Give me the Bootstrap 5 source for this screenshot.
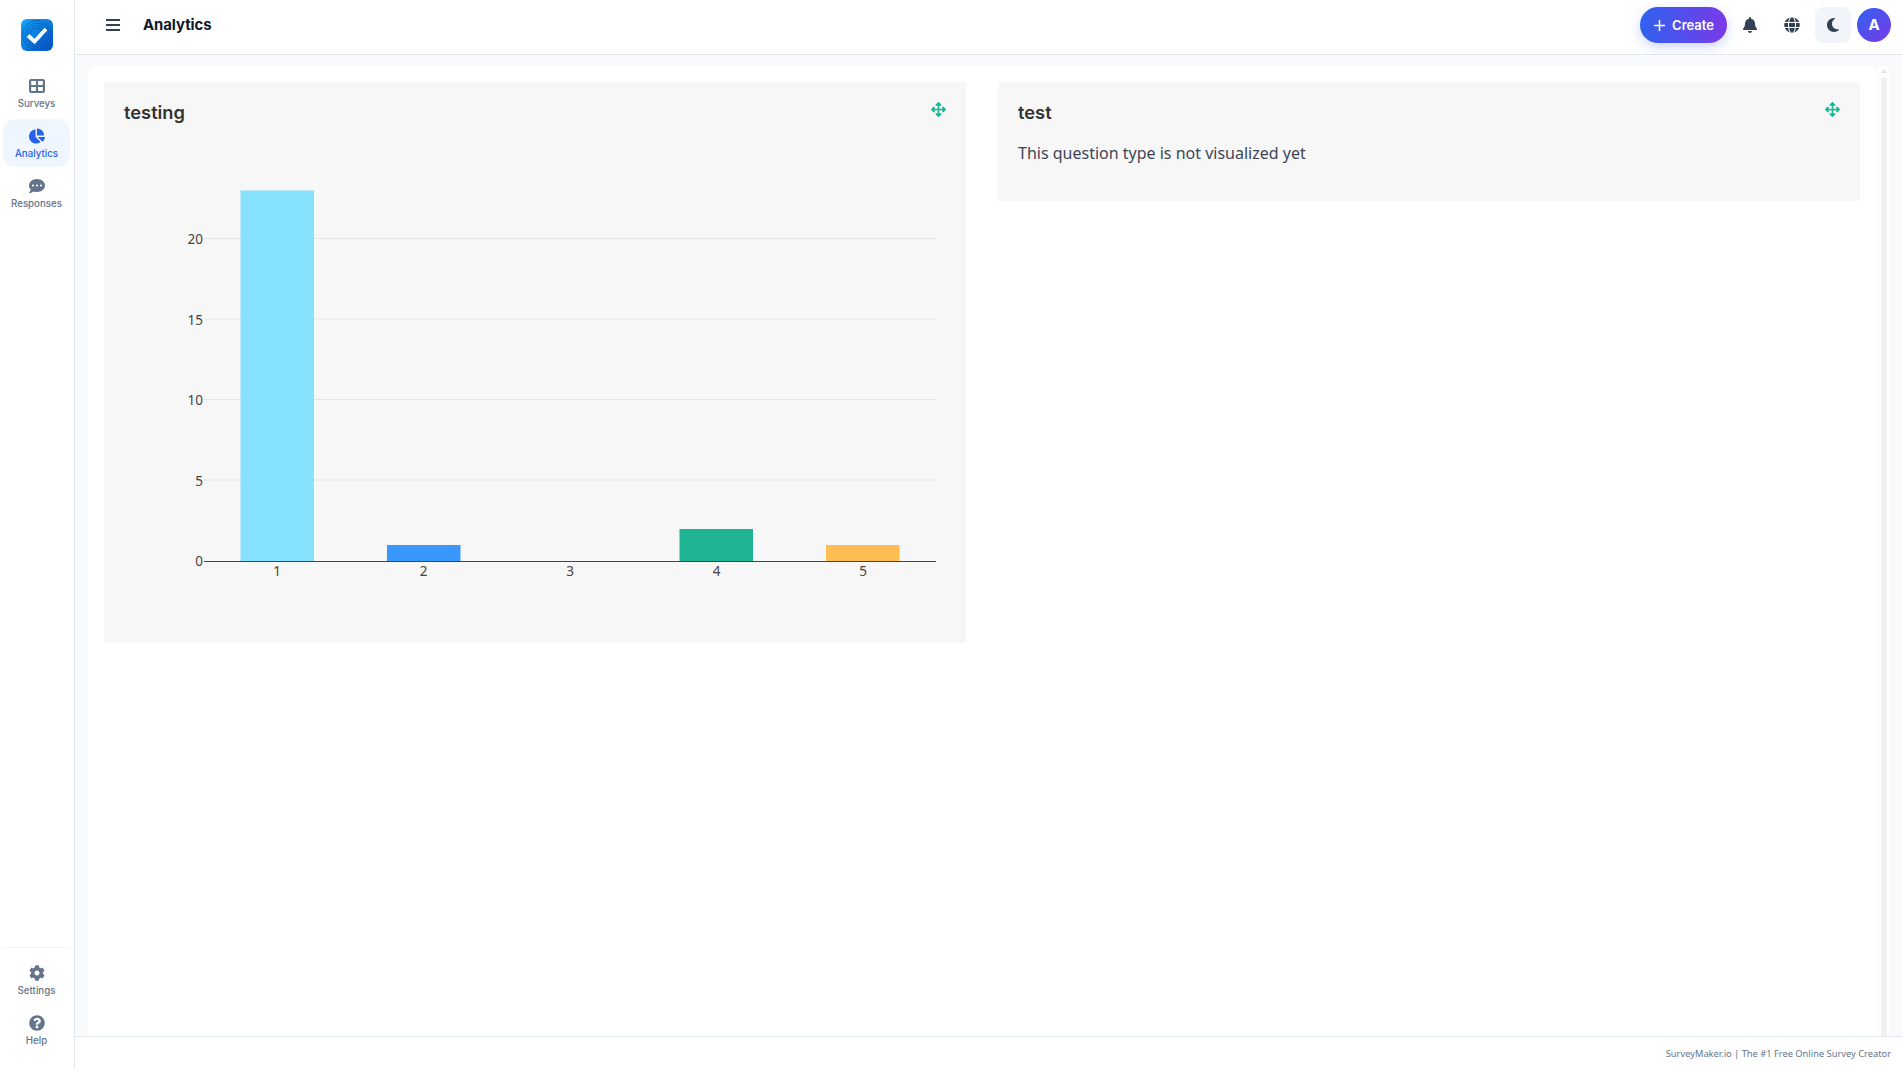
<!DOCTYPE html>
<html lang="en">
<head>
    <meta charset="UTF-8">
    <meta name="viewport" content="width=device-width, initial-scale=1.0">
    <title>Analytics</title>
    <link href="https://cdn.jsdelivr.net/npm/bootstrap@5.3.0/dist/css/bootstrap.min.css" rel="stylesheet">
    <style>
        body { font-family: "Inter", "Liberation Sans", sans-serif; background: #fff; overflow: hidden; color: #334155; }
        .side-rail { width: 75px; border-right: 1px solid #e2e8f0; padding: 0 4px 13px 3px; }
        .side-logo { padding: 19px 0 18px 1px; text-align: center; line-height: 0; }
        .side-link { display: flex; flex-direction: column; align-items: center; height: 48px; margin-bottom: 2px; padding-top: 9px; border-radius: 12px; color: #64748b; font-size: 9.700px; font-weight: 500; line-height: 14px; text-decoration: none; }
        .side-link svg { width: 16px; height: 16px; margin-bottom: 3px; fill: currentColor; }
        .side-link.on { background: #eff6ff; color: #2563eb; }
        .side-foot { border-top: 1px solid #f1f5f9; padding-top: 8px; }
        .top-bar { height: 55px; border-bottom: 1px solid #e2e8f0; padding: 0 11px 4px 31px; }
        .top-title { font-size: 14.800px; font-weight: 700; color: #0f172a; margin: 2px 0 0 23px; }
        .burger { width: 14px; height: 12px; stroke: #334155; stroke-width: 2; }
        .top-tools { gap: 5.500px; }
        .create-btn { height: 36px; width: 87px; border-radius: 18px; border: 0; color: #fff; font-size: 13px; font-weight: 600; background: linear-gradient(90deg, #2f62ef, #7a3ae8); box-shadow: 0 4px 12px rgba(59, 94, 240, .25); padding: 2px 0 0 2px; }
        .create-btn svg { margin-top: -1px; margin-right: 7px; }
        .top-icon { width: 36px; height: 36px; border-radius: 8px; color: #334155; }
        .top-icon svg { width: 16px; height: 16px; fill: currentColor; }
        .top-icon.moon-box { background: #f1f5f9; }
        .avatar-dot { width: 34px; height: 34px; border-radius: 50%; margin-left: .500px; background: linear-gradient(135deg, #2f62ef, #7a3ae8); color: #fff; font-size: 15px; font-weight: 700; }
        .work-area { background: #f8fafc; padding: 11px 13px 0 13px; min-height: 0; gap: 1px; }
        .white-panel { background: #fff; border-radius: 9px 9px 0 0; padding: 16px 18px 16px 16px; }
        .scroll-rail { width: 10px; padding: 0 2px; background: #fff; }
        .scroll-arrow { width: 0; height: 0; margin: 3px 0 4px; border: 3px solid transparent; border-top: 0; border-bottom: 4px solid #e2e5e9; }
        .scroll-thumb { background: #f0f1f3; border-radius: 3px 3px 0 0; }
        .card-row { --bs-gutter-x: 32px; --bs-gutter-y: 0; }
        .stat-box { background: #f7f7f7; padding: 20px; position: relative; }
        .stat-title { font-size: 18.300px; line-height: 22px; font-weight: 600; color: #333; margin: -1px 0 17px; }
        .stat-note { font-family: "Noto Sans", sans-serif; font-size: 16px; line-height: 24px; color: #3e4656; margin: 0 0 16px; padding-top: 1px; }
        .move-ico { position: absolute; top: 20px; right: 20px; width: 15px; height: 15px; fill: #1eb594; }
        .chart-svg { display: block; width: 822px; height: 482px; margin-bottom: 1px; }
        .chart-svg text { font-family: "Noto Sans", sans-serif; font-size: 13.500px; fill: #444; }
        .foot-bar { height: 33px; border-top: 1px solid #e2e8f0; padding: 1px 11px 0; font-family: "Noto Sans", sans-serif; font-size: 9.300px; color: #64748b; }
    </style>
</head>
<body>
<div class="d-flex vh-100">
    <!-- Sidebar -->
    <nav class="side-rail d-flex flex-column flex-shrink-0">
        <div class="side-logo">
            <svg width="32" height="32" viewBox="0 0 32 32">
                <defs>
                    <linearGradient id="logoBg" x1="0" y1="0" x2="1" y2="1">
                        <stop offset="0" stop-color="#12a8f8"/>
                        <stop offset="1" stop-color="#0450c4"/>
                    </linearGradient>
                </defs>
                <rect width="32" height="32" rx="6" fill="url(#logoBg)"/>
                <g fill="none" stroke="#083a9e" stroke-opacity=".6" stroke-width=".8">
                    <circle cx="16" cy="16" r="7"/><circle cx="16" cy="16" r="9.500"/><circle cx="16" cy="16" r="12"/><circle cx="16" cy="16" r="14.500"/>
                </g>
                <path d="M7 16.500l6.500 6L25 10" fill="none" stroke="#fff" stroke-width="3.800"/>
            </svg>
        </div>
        <a class="side-link" href="#">
            <svg viewBox="0 0 16 16"><path fill-rule="evenodd" d="M2 1h12a2 2 0 0 1 2 2v10a2 2 0 0 1-2 2H2a2 2 0 0 1-2-2V3a2 2 0 0 1 2-2zm.2 2v4h4.700V3H2.200zm6.900 0v4h4.700V3H9.100zM2.200 9v4h4.700V9H2.200zm6.900 0v4h4.700V9H9.100z"/></svg>
            Surveys
        </a>
        <a class="side-link on" href="#">
            <svg viewBox="0 0 544 512"><path d="M527.79 288H290.5l158.03 158.03c6.04 6.04 15.98 6.53 22.19.68 38.7-36.46 65.32-85.61 73.13-140.86 1.34-9.46-6.51-17.85-16.06-17.85zm-15.83-64.8C503.72 103.74 408.26 8.28 288.8.04 279.68-.59 272 7.1 272 16.24V240h223.77c9.14 0 16.82-7.68 16.19-16.8zM224 288V50.71c0-9.55-8.39-17.4-17.84-16.06C86.99 51.49-4.1 155.6.14 280.37 4.5 408.51 114.83 513.59 243.03 511.98c50.4-.63 96.97-16.87 135.26-44.03 7.9-5.6 8.42-17.23 1.57-24.08L224 288z"/></svg>
            Analytics
        </a>
        <a class="side-link" href="#">
            <svg viewBox="0 0 512 512"><path d="M256 32C114.6 32 0 125.1 0 240c0 49.6 21.4 95 57 130.7C44.5 421.1 2.7 466 2.2 466.5c-2.2 2.3-2.8 5.7-1.5 8.7S4.8 480 8 480c66.3 0 116-31.8 140.6-51.4 32.7 12.3 69 19.4 107.4 19.4 141.400 0 256-93.100 256-208S397.400 32 256 32zM128 272c-17.700 0-32-14.300-32-32s14.300-32 32-32 32 14.300 32 32-14.300 32-32 32zm128 0c-17.700 0-32-14.300-32-32s14.300-32 32-32 32 14.300 32 32-14.300 32-32 32zm128 0c-17.700 0-32-14.300-32-32s14.300-32 32-32 32 14.300 32 32-14.300 32-32 32z"/></svg>
            Responses
        </a>
        <div class="side-foot mt-auto">
            <a class="side-link" href="#">
                <svg viewBox="0 0 512 512"><path d="M487.4 315.7l-42.6-24.6c4.3-23.2 4.3-47 0-70.2l42.6-24.6c4.9-2.8 7.1-8.6 5.5-14-11.1-35.6-30-67.8-54.7-94.6-3.8-4.1-10-5.1-14.8-2.3L380.8 110c-17.9-15.4-38.5-27.3-60.8-35.1V25.8c0-5.6-3.9-10.5-9.4-11.7-36.7-8.2-74.3-7.8-109.2 0-5.5 1.2-9.4 6.1-9.4 11.7V75c-22.2 7.9-42.8 19.8-60.8 35.1L88.7 85.500c-4.900-2.800-11-1.900-14.800 2.300-24.700 26.700-43.600 58.900-54.700 94.600-1.700 5.400.6 11.200 5.500 14L67.300 221c-4.300 23.200-4.300 47 0 70.200l-42.600 24.600c-4.900 2.800-7.100 8.600-5.500 14 11.100 35.600 30 67.800 54.700 94.600 3.800 4.100 10 5.100 14.800 2.300l42.600-24.600c17.900 15.400 38.500 27.300 60.800 35.100v49.200c0 5.600 3.900 10.500 9.400 11.700 36.700 8.200 74.300 7.800 109.200 0 5.500-1.200 9.400-6.100 9.400-11.700v-49.200c22.200-7.900 42.800-19.800 60.800-35.100l42.600 24.600c4.900 2.800 11 1.900 14.800-2.300 24.700-26.700 43.600-58.900 54.700-94.600 1.500-5.500-.7-11.300-5.600-14.100zM256 336c-44.100 0-80-35.900-80-80s35.900-80 80-80 80 35.900 80 80-35.900 80-80 80z"/></svg>
                Settings
            </a>
            <a class="side-link" href="#">
                <svg viewBox="0 0 512 512"><path d="M504 256c0 136.997-111.043 248-248 248S8 392.997 8 256C8 119.083 119.043 8 256 8s248 111.083 248 248zM262.655 90c-54.497 0-89.255 22.957-116.549 63.758-3.536 5.286-2.353 12.415 2.715 16.258l34.699 26.310c5.205 3.947 12.621 3.008 16.665-2.122 17.864-22.658 30.113-35.797 57.303-35.797 20.429 0 45.698 13.148 45.698 32.958 0 14.976-12.363 22.667-32.534 33.976C247.128 238.528 216 254.941 216 296v4c0 6.627 5.373 12 12 12h56c6.627 0 12-5.373 12-12v-1.333c0-28.462 83.186-29.647 83.186-106.667 0-58.002-60.165-102-116.531-102zM256 338c-25.365 0-46 20.635-46 46 0 25.364 20.635 46 46 46s46-20.636 46-46c0-25.365-20.635-46-46-46z"/></svg>
                Help
            </a>
        </div>
    </nav>

    <div class="d-flex flex-column flex-grow-1" style="min-width:0">
        <!-- Top bar -->
        <header class="top-bar d-flex align-items-center flex-shrink-0">
            <svg class="burger" viewBox="0 0 14 12"><path d="M0 1h14M0 6h14M0 11h14"/></svg>
            <h1 class="top-title">Analytics</h1>
            <div class="top-tools d-flex align-items-center ms-auto">
                <button class="create-btn d-flex align-items-center justify-content-center">
                    <svg width="11" height="11" viewBox="0 0 11 11"><path d="M5.500 0v11M0 5.500h11" stroke="#fff" stroke-width="1.500"/></svg>Create
                </button>
                <span class="top-icon d-flex align-items-center justify-content-center">
                    <svg viewBox="0 0 448 512"><path d="M224 512c35.320 0 63.970-28.650 63.970-64H160.030c0 35.350 28.650 64 63.970 64zm215.390-149.710c-19.320-20.760-55.470-51.990-55.470-154.290 0-77.700-54.480-139.900-127.940-155.160V32c0-17.670-14.320-32-31.980-32s-31.980 14.330-31.980 32v20.840C118.560 68.100 64.080 130.300 64.080 208c0 102.300-36.150 133.530-55.470 154.290-6 6.450-8.660 14.160-8.610 21.710.11 16.400 12.980 32 32.100 32h383.800c19.120 0 32-15.600 32.100-32 .05-7.550-2.610-15.270-8.610-21.710z"/></svg>
                </span>
                <span class="top-icon d-flex align-items-center justify-content-center">
                    <svg viewBox="0 0 496 512"><path d="M336.500 160C322 70.700 287.800 8 248 8s-74 62.700-88.500 152h177zM152 256c0 22.200 1.200 43.500 3.300 64h185.300c2.100-20.500 3.300-41.800 3.300-64s-1.200-43.500-3.300-64H155.300c-2.100 20.500-3.300 41.800-3.300 64zm324.700-96c-28.600-67.900-86.500-120.400-158-141.600 24.400 33.800 41.200 84.700 50 141.600h108zM177.200 18.400C105.800 39.600 47.800 92.100 19.300 160h108c8.700-56.900 25.500-107.800 49.900-141.600zM487.400 192H372.700c2.100 21 3.300 42.500 3.300 64s-1.200 43-3.300 64h114.600c5.500-20.500 8.600-41.800 8.600-64s-3.100-43.500-8.500-64zM120 256c0-21.500 1.200-43 3.300-64H8.600C3.200 212.500 0 233.800 0 256s3.200 43.500 8.600 64h114.600c-2-21-3.200-42.500-3.200-64zm39.500 96c14.500 89.300 48.700 152 88.500 152s74-62.700 88.500-152h-177zm159.300 141.600c71.400-21.200 129.400-73.700 158-141.600h-108c-8.800 56.900-25.600 107.800-50 141.600zM19.300 352c28.600 67.900 86.500 120.400 158 141.600-24.400-33.800-41.200-84.700-50-141.600h-108z"/></svg>
                </span>
                <span class="top-icon moon-box d-flex align-items-center justify-content-center">
                    <svg viewBox="0 0 384 512"><path d="M223.500 32C100 32 0 132.300 0 256S100 480 223.500 480c60.600 0 115.500-24.200 155.800-63.400c5-4.900 6.300-12.500 3.100-18.700s-10.100-9.700-17-8.500c-9.800 1.700-19.800 2.600-30.100 2.600c-96.900 0-175.500-78.800-175.500-176c0-65.800 36-123.100 89.300-153.300c6.100-3.500 9.200-10.500 7.700-17.300s-7.300-11.900-14.300-12.500c-6.300-.5-12.600-.8-19-.8z"/></svg>
                </span>
                <span class="avatar-dot d-flex align-items-center justify-content-center">A</span>
            </div>
        </header>

        <!-- Page content -->
        <main class="work-area d-flex flex-grow-1">
            <div class="white-panel flex-grow-1">
                <div class="row card-row align-items-start">
                    <div class="col-6">
                        <section class="stat-box">
                            <h2 class="stat-title">testing</h2>
                            <svg class="move-ico" viewBox="0 0 512 512"><path d="M352.201 425.775l-79.196 79.196c-9.373 9.373-24.568 9.373-33.941 0l-79.196-79.196c-15.119-15.119-4.411-40.971 16.971-40.970h51.162L228 284H127.196v51.162c0 21.382-25.851 32.090-40.971 16.971L7.029 272.937c-9.373-9.373-9.373-24.569 0-33.941L86.225 159.800c15.119-15.119 40.971-4.411 40.971 16.971V228H228V127.196h-51.230c-21.382 0-32.090-25.851-16.971-40.971l79.196-79.196c9.373-9.373 24.568-9.373 33.941 0l79.196 79.196c15.119 15.119 4.411 40.971-16.971 40.971h-51.162V228h100.804v-51.162c0-21.382 25.851-32.090 40.970-16.971l79.196 79.196c9.373 9.373 9.373 24.569 0 33.941L425.773 352.200c-15.119 15.119-40.971 4.411-40.970-16.971V284H284v100.804h51.230c21.382 0 32.090 25.851 16.971 40.971z"/></svg>
                            <svg class="chart-svg" viewBox="0 0 822 482">
                                <g stroke="#e5e5e5" stroke-width="1">
                                    <path d="M80 98.500H812M80 179H812M80 259.500H812M80 340H812"/>
                                </g>
                                <rect x="116.500" y="50.500" width="73.500" height="370.500" fill="#86e2fd"/>
                                <rect x="263" y="405" width="73.500" height="16" fill="#3a97fc"/>
                                <rect x="555.500" y="389" width="73.500" height="32" fill="#1fb594"/>
                                <rect x="702" y="405" width="73.500" height="16" fill="#ffbd53"/>
                                <path d="M80 421.500H812" stroke="#444" stroke-width="1"/>
                                <g text-anchor="end">
                                    <text x="79" y="104">20</text>
                                    <text x="79" y="185">15</text>
                                    <text x="79" y="265">10</text>
                                    <text x="79" y="345.500">5</text>
                                    <text x="79" y="426">0</text>
                                </g>
                                <g text-anchor="middle">
                                    <text x="153" y="436">1</text>
                                    <text x="299.500" y="436">2</text>
                                    <text x="446" y="436">3</text>
                                    <text x="592.500" y="436">4</text>
                                    <text x="739" y="436">5</text>
                                </g>
                            </svg>
                        </section>
                    </div>
                    <div class="col-6">
                        <section class="stat-box">
                            <h2 class="stat-title">test</h2>
                            <svg class="move-ico" viewBox="0 0 512 512"><path d="M352.201 425.775l-79.196 79.196c-9.373 9.373-24.568 9.373-33.941 0l-79.196-79.196c-15.119-15.119-4.411-40.971 16.971-40.970h51.162L228 284H127.196v51.162c0 21.382-25.851 32.090-40.971 16.971L7.029 272.937c-9.373-9.373-9.373-24.569 0-33.941L86.225 159.800c15.119-15.119 40.971-4.411 40.971 16.971V228H228V127.196h-51.230c-21.382 0-32.090-25.851-16.971-40.971l79.196-79.196c9.373-9.373 24.568-9.373 33.941 0l79.196 79.196c15.119 15.119 4.411 40.971-16.971 40.971h-51.162V228h100.804v-51.162c0-21.382 25.851-32.090 40.970-16.971l79.196 79.196c9.373 9.373 9.373 24.569 0 33.941L425.773 352.200c-15.119 15.119-40.971 4.411-40.970-16.971V284H284v100.804h51.230c21.382 0 32.090 25.851 16.971 40.971z"/></svg>
                            <p class="stat-note">This question type is not visualized yet</p>
                        </section>
                    </div>
                </div>
            </div>
            <div class="scroll-rail d-flex flex-column flex-shrink-0">
                <div class="scroll-arrow"></div>
                <div class="scroll-thumb flex-grow-1"></div>
            </div>
        </main>

        <footer class="foot-bar d-flex align-items-center justify-content-end flex-shrink-0">SurveyMaker.io | The #1 Free Online Survey Creator</footer>
    </div>
</div>
<script src="https://cdn.jsdelivr.net/npm/bootstrap@5.3.0/dist/js/bootstrap.bundle.min.js"></script>
</body>
</html>
